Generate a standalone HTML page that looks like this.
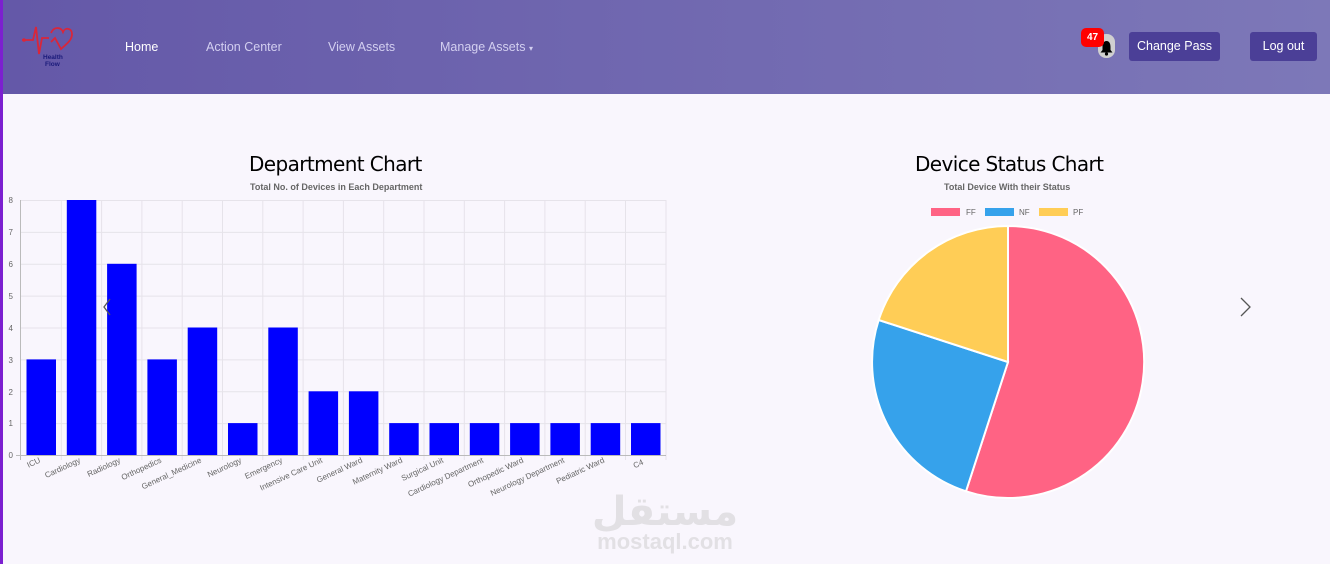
<!DOCTYPE html>
<html><head><meta charset="utf-8"><style>
*{margin:0;padding:0;box-sizing:border-box}
body{width:1330px;height:564px;overflow:hidden;background:#f9f6fd;font-family:"Liberation Sans",sans-serif;position:relative}
.lb{position:absolute;left:0;top:0;width:3px;height:564px;background:#7c1fd0}
nav{position:absolute;left:3px;top:0;width:1327px;height:94px;background:linear-gradient(90deg,#6458a8,#7d78b8)}
.nl{position:absolute;top:40px;font-size:12.5px;color:#d3cff0}
.btn{position:absolute;top:32px;height:29px;background:#4b3f97;color:#fff;font-size:12.5px;border-radius:3px;text-align:center;line-height:29px}
h2{position:absolute;font-weight:normal;font-size:20px;color:#000;font-family:"DejaVu Sans",sans-serif;letter-spacing:-0.6px}
.sub{position:absolute;font-size:9px;font-weight:bold;color:#666}
</style></head><body>
<div class="lb"></div>
<nav>
<svg style="position:absolute;left:17px;top:24px" width="56" height="44" viewBox="0 0 56 44">
<path d="M2 16 H13 L16 3 L19 30 L22 14 H29 M31 9 C34 2 41 3 43 8 C45 3 52 4 52 10 C52 17 45 21 41 25 L35 14 L31 18" fill="none" stroke="#d9263a" stroke-width="1.8"/>
<circle cx="4" cy="16" r="1.8" fill="#d9263a"/>
<text x="23" y="35" font-size="6.5" font-weight="bold" fill="#1a1a7a" font-family="Liberation Sans">Health</text>
<text x="25" y="42" font-size="6.5" font-weight="bold" fill="#1a1a7a" font-family="Liberation Sans">Flow</text>
</svg>
<div class="nl" style="left:122px;color:#fff">Home</div>
<div class="nl" style="left:203px">Action Center</div>
<div class="nl" style="left:325px">View Assets</div>
<div class="nl" style="left:437px">Manage Assets <span style="font-size:8px">▾</span></div>
<div style="position:absolute;left:1095px;top:34px;width:17px;height:24px;background:#d0d0d0;border-radius:8px"></div>
<svg style="position:absolute;left:1096px;top:40px" width="15" height="16" viewBox="0 0 15 16"><path d="M7.5 1 C4.5 1 3.5 4 3.5 7 L3.5 10 L1.5 12.5 H13.5 L11.5 10 L11.5 7 C11.5 4 10.5 1 7.5 1 Z" fill="#000"/><circle cx="7.5" cy="14" r="1.6" fill="#000"/></svg>
<div style="position:absolute;left:1078px;top:28px;width:23px;height:19px;background:#f00;border-radius:5px;color:#fff;font-size:10px;font-weight:bold;text-align:center;line-height:19px">47</div>
<div class="btn" style="left:1126px;width:91px">Change Pass</div>
<div class="btn" style="left:1247px;width:67px">Log out</div>
</nav>
<h2 style="left:249px;top:152px">Department Chart</h2>
<div class="sub" style="left:250px;top:182px">Total No. of Devices in Each Department</div>
<h2 style="left:915px;top:152px">Device Status Chart</h2>
<div class="sub" style="left:944px;top:182px">Total Device With their Status</div>
<svg style="position:absolute;left:0;top:0" width="1330" height="564" font-family="Liberation Sans">
<g stroke="#e6e3ea" stroke-width="1">
<line x1="21" y1="200.5" x2="666" y2="200.5"/><line x1="21" y1="232.4" x2="666" y2="232.4"/><line x1="21" y1="264.3" x2="666" y2="264.3"/><line x1="21" y1="296.1" x2="666" y2="296.1"/><line x1="21" y1="328" x2="666" y2="328"/><line x1="21" y1="359.9" x2="666" y2="359.9"/><line x1="21" y1="391.8" x2="666" y2="391.8"/><line x1="21" y1="423.6" x2="666" y2="423.6"/>
<line x1="61.3" y1="200" x2="61.3" y2="460"/><line x1="101.6" y1="200" x2="101.6" y2="460"/><line x1="141.9" y1="200" x2="141.9" y2="460"/><line x1="182.2" y1="200" x2="182.2" y2="460"/><line x1="222.5" y1="200" x2="222.5" y2="460"/><line x1="262.8" y1="200" x2="262.8" y2="460"/><line x1="303.1" y1="200" x2="303.1" y2="460"/><line x1="343.4" y1="200" x2="343.4" y2="460"/><line x1="383.7" y1="200" x2="383.7" y2="460"/><line x1="424" y1="200" x2="424" y2="460"/><line x1="464.3" y1="200" x2="464.3" y2="460"/><line x1="504.6" y1="200" x2="504.6" y2="460"/><line x1="544.9" y1="200" x2="544.9" y2="460"/><line x1="585.2" y1="200" x2="585.2" y2="460"/><line x1="625.5" y1="200" x2="625.5" y2="460"/><line x1="666" y1="200" x2="666" y2="460"/>
</g>
<line x1="20.5" y1="200" x2="20.5" y2="460" stroke="#bbb"/><line x1="16" y1="455.5" x2="666" y2="455.5" stroke="#bbb"/>
<g font-size="8" fill="#666" text-anchor="end">
<text x="13" y="203">8</text><text x="13" y="235">7</text><text x="13" y="267">6</text><text x="13" y="299">5</text><text x="13" y="331">4</text><text x="13" y="363">3</text><text x="13" y="395">2</text><text x="13" y="426">1</text><text x="13" y="458">0</text>
</g>
<g fill="#0000ff">
<rect x="26.5" y="359.4" width="29.5" height="95.6"/><rect x="66.8" y="200" width="29.5" height="255"/><rect x="107.1" y="263.8" width="29.5" height="191.2"/><rect x="147.4" y="359.4" width="29.5" height="95.6"/><rect x="187.7" y="327.5" width="29.5" height="127.5"/><rect x="228" y="423.1" width="29.5" height="31.9"/><rect x="268.3" y="327.5" width="29.5" height="127.5"/><rect x="308.6" y="391.3" width="29.5" height="63.7"/><rect x="348.9" y="391.3" width="29.5" height="63.7"/><rect x="389.2" y="423.1" width="29.5" height="31.9"/><rect x="429.5" y="423.1" width="29.5" height="31.9"/><rect x="469.8" y="423.1" width="29.5" height="31.9"/><rect x="510.1" y="423.1" width="29.5" height="31.9"/><rect x="550.4" y="423.1" width="29.5" height="31.9"/><rect x="590.7" y="423.1" width="29.5" height="31.9"/><rect x="631" y="423.1" width="29.5" height="31.9"/>
</g>
<g font-size="8" fill="#666" text-anchor="end">
<text transform="translate(41,462) rotate(-25)">ICU</text>
<text transform="translate(81,462) rotate(-25)">Cardiology</text>
<text transform="translate(121,462) rotate(-25)">Radiology</text>
<text transform="translate(162,462) rotate(-25)">Orthopedics</text>
<text transform="translate(202,462) rotate(-25)">General_Medicine</text>
<text transform="translate(242,462) rotate(-25)">Neurology</text>
<text transform="translate(283,462) rotate(-25)">Emergency</text>
<text transform="translate(323,462) rotate(-25)">Intensive Care Unit</text>
<text transform="translate(363,462) rotate(-25)">General Ward</text>
<text transform="translate(403,462) rotate(-25)">Maternity Ward</text>
<text transform="translate(444,462) rotate(-25)">Surgical Unit</text>
<text transform="translate(484,462) rotate(-25)">Cardiology Department</text>
<text transform="translate(524,462) rotate(-25)">Orthopedic Ward</text>
<text transform="translate(565,462) rotate(-25)">Neurology Department</text>
<text transform="translate(605,462) rotate(-25)">Pediatric Ward</text>
<text transform="translate(644,464) rotate(-25)">C4</text>
</g>
<path d="M110 299 L104 307 L110 315" fill="none" stroke="#555" stroke-width="1.3"/>
<path d="M1241 298 L1250 307 L1241 316" fill="none" stroke="#555" stroke-width="1.3"/>
<rect x="931" y="208" width="29" height="8" fill="#ff6384"/><text x="966" y="215" font-size="8" fill="#666">FF</text>
<rect x="985" y="208" width="29" height="8" fill="#36a2eb"/><text x="1019" y="215" font-size="8" fill="#666">NF</text>
<rect x="1039" y="208" width="29" height="8" fill="#ffcd56"/><text x="1073" y="215" font-size="8" fill="#666">PF</text>
<g stroke="#fff" stroke-width="2">
<path d="M1008 362 L1008 226 A136 136 0 1 1 966 491.3 Z" fill="#ff6384"/>
<path d="M1008 362 L966 491.3 A136 136 0 0 1 878.7 320 Z" fill="#36a2eb"/>
<path d="M1008 362 L878.7 320 A136 136 0 0 1 1008 226 Z" fill="#ffcd56"/>
</g>
<text x="665" y="525" font-size="40" font-weight="bold" fill="#e2e0e4" text-anchor="middle" font-family="DejaVu Sans">مستقل</text>
<text x="665" y="549" font-size="22" font-weight="bold" fill="#e2e0e4" text-anchor="middle">mostaql.com</text>
</svg>
</body></html>
